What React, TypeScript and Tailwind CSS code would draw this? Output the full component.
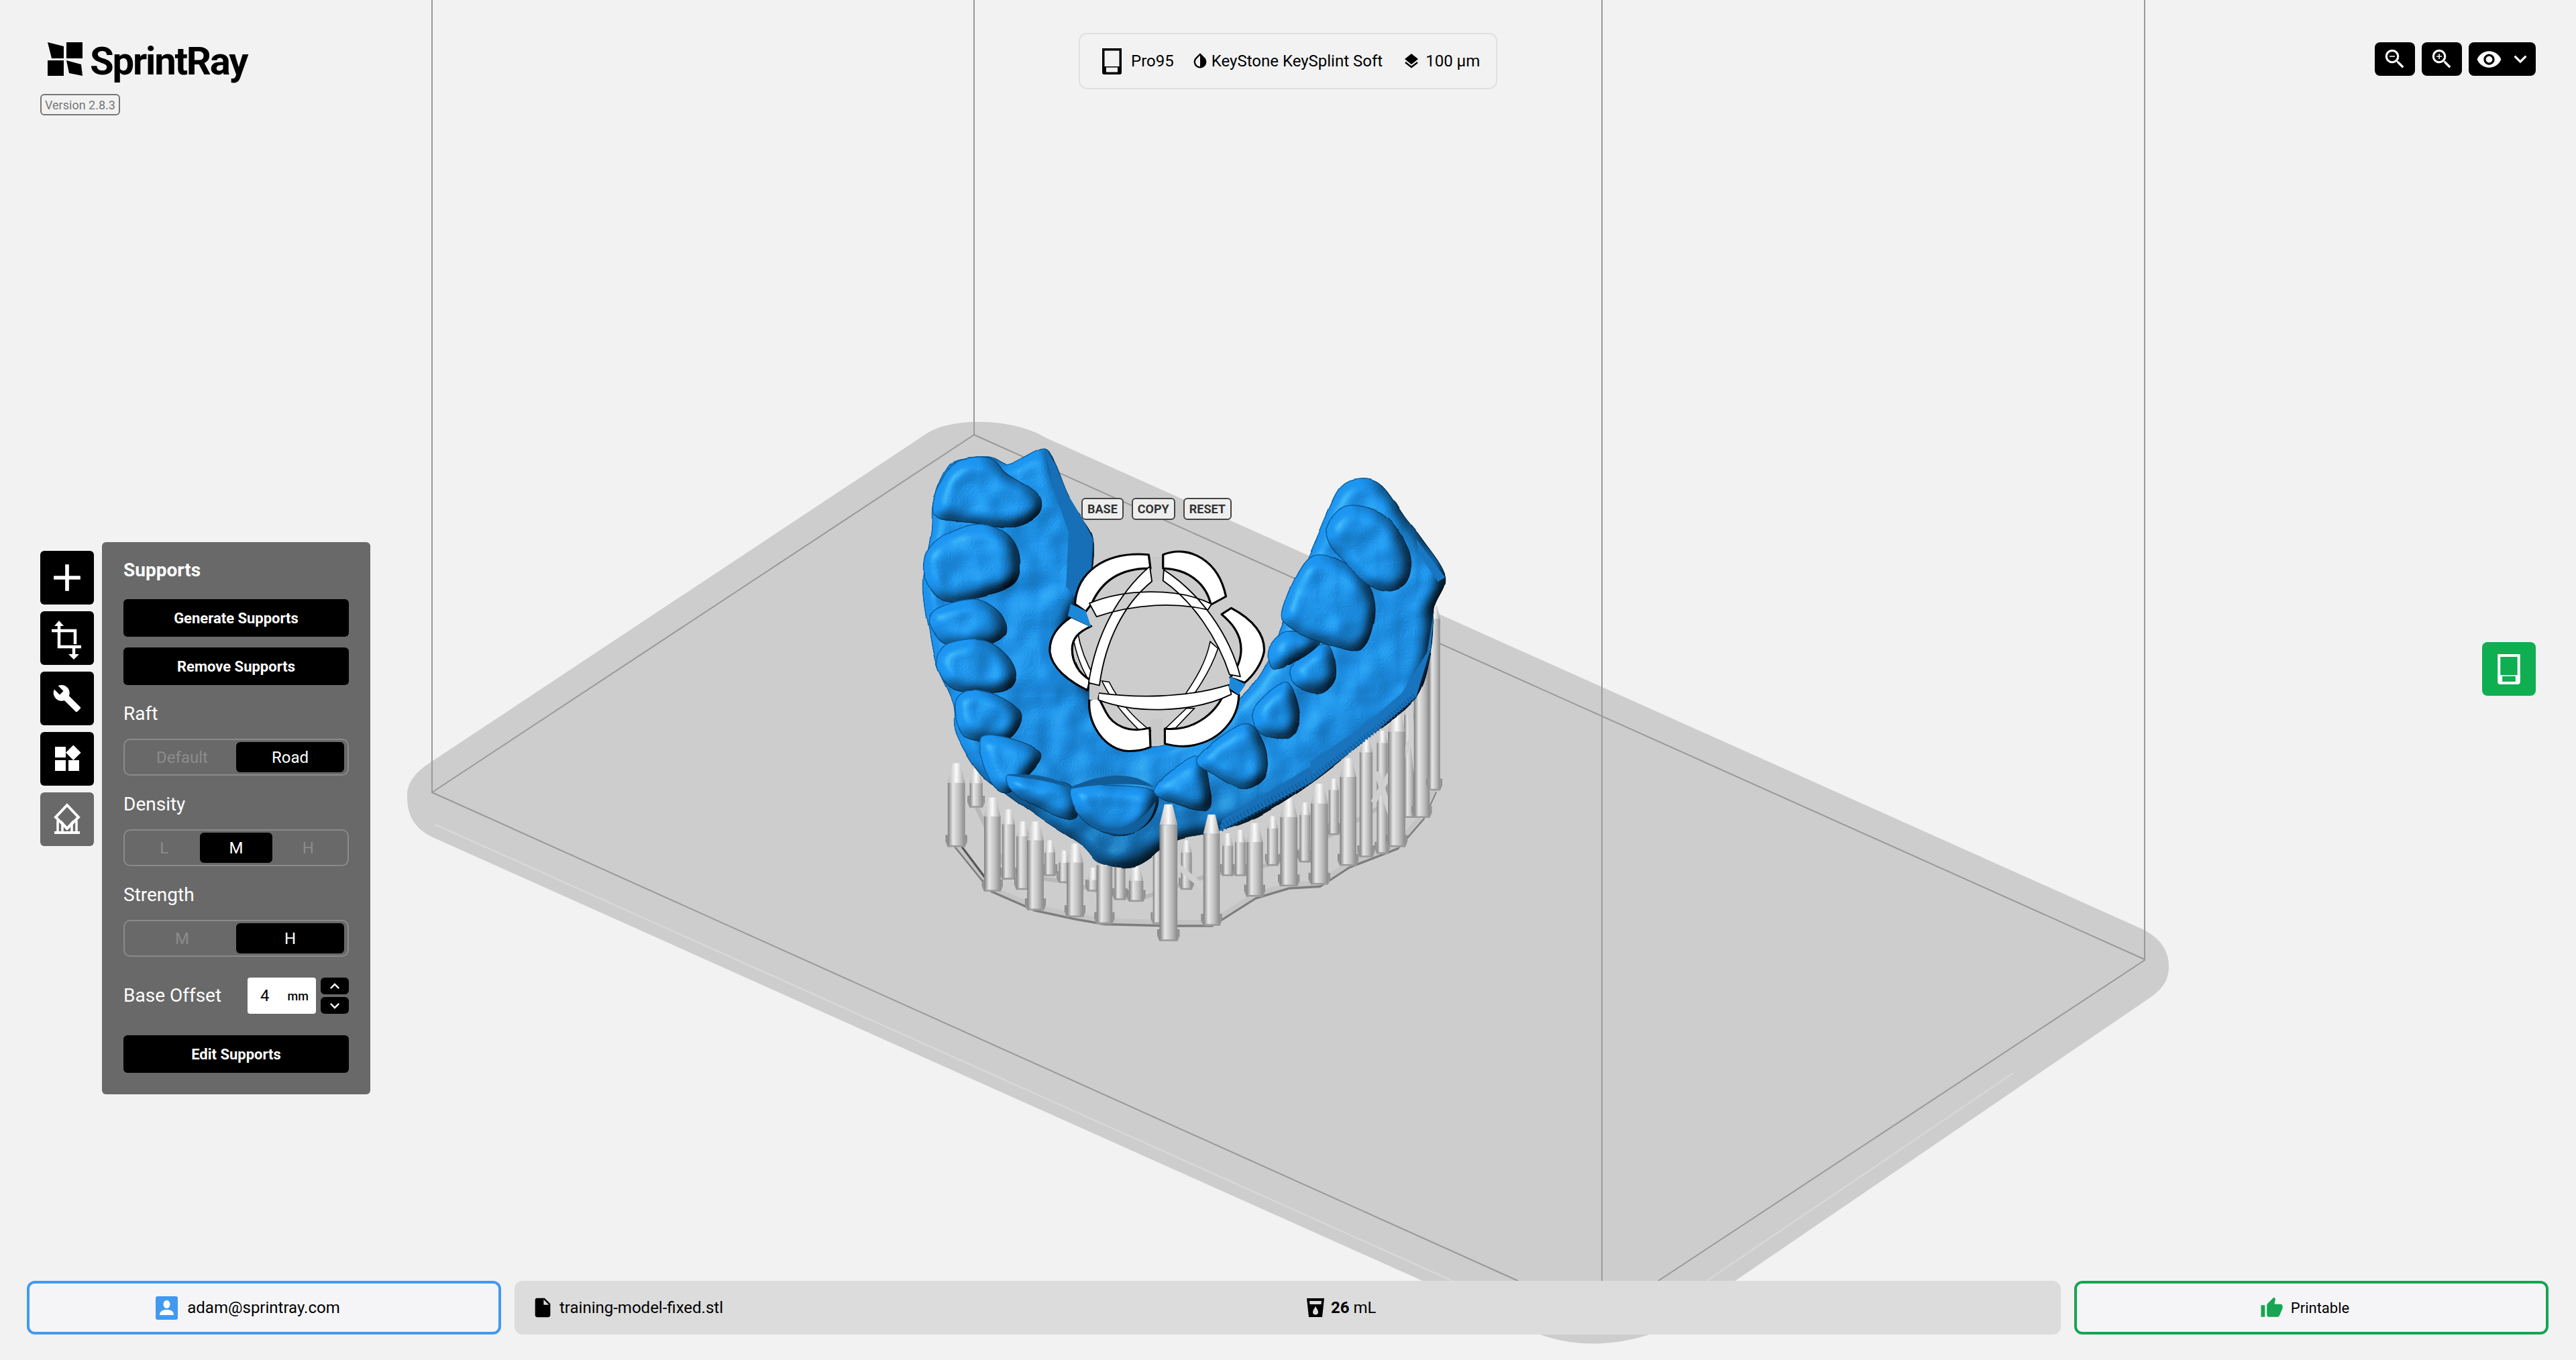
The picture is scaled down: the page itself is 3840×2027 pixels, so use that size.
import {
  MdAdd,
  MdBuild,
  MdExpandLess,
  MdExpandMore,
  MdInsertDriveFile,
  MdInvertColors,
  MdThumbUp,
  MdVisibility,
  MdWidgets,
  MdZoomIn,
  MdZoomOut,
} from "react-icons/md";

type Pt = [number, number];

// closed catmull-rom through the traced points
function smooth(pts: Pt[]) {
  const n = pts.length;
  let d = `M${pts[0][0]} ${pts[0][1]}`;
  for (let i = 0; i < n; i++) {
    const p0 = pts[(i - 1 + n) % n];
    const p1 = pts[i];
    const p2 = pts[(i + 1) % n];
    const p3 = pts[(i + 2) % n];
    const c1x = p1[0] + (p2[0] - p0[0]) / 6;
    const c1y = p1[1] + (p2[1] - p0[1]) / 6;
    const c2x = p2[0] - (p3[0] - p1[0]) / 6;
    const c2y = p2[1] - (p3[1] - p1[1]) / 6;
    d += `C${c1x} ${c1y} ${c2x} ${c2y} ${p2[0]} ${p2[1]}`;
  }
  return d + "Z";
}

const jaw: Pt[] = [
  [125, 130], [160, 92], [250, 82], [300, 103], [340, 85], [405, 55], [435, 100], [470, 190], [510, 260],
  [540, 320], [535, 420], [500, 500], [470, 560], [480, 650], [525, 750], [590, 860], [700, 925], [830, 880],
  [945, 790], [1010, 710], [1060, 590], [1110, 450], [1170, 300], [1225, 175], [1285, 145], [1345, 165],
  [1410, 260], [1455, 320], [1520, 430], [1490, 520], [1480, 640], [1440, 780], [1330, 880], [1150, 1030],
  [1000, 1130], [880, 1175], [770, 1200], [660, 1275], [560, 1265], [510, 1215], [400, 1140], [300, 1065],
  [225, 1005], [160, 890], [150, 800], [105, 690], [85, 590], [68, 450], [90, 300], [95, 215],
];

const teeth: Pt[][] = [
  [[120, 150], [160, 95], [250, 85], [300, 130], [385, 190], [385, 250], [310, 285], [200, 270], [110, 260], [95, 215]],
  [[85, 345], [140, 300], [225, 275], [300, 305], [335, 370], [320, 450], [220, 490], [130, 500], [80, 450], [70, 400]],
  [[85, 565], [110, 520], [205, 495], [275, 530], [300, 585], [270, 620], [190, 635], [120, 625]],
  [[105, 680], [130, 630], [230, 615], [300, 660], [325, 720], [290, 765], [180, 765], [130, 740]],
  [[155, 800], [190, 762], [270, 775], [340, 830], [310, 900], [235, 910], [175, 890]],
  [[225, 905], [300, 900], [395, 945], [360, 1010], [300, 1060], [250, 1020]],
  [[300, 1010], [400, 1025], [480, 1045], [495, 1130], [440, 1130], [330, 1070]],
  [[480, 1050], [600, 1040], [715, 1060], [700, 1140], [620, 1185], [520, 1150]],
  [[710, 1050], [830, 955], [865, 1050], [860, 1110], [790, 1100]],
  [[830, 960], [960, 860], [1015, 920], [1020, 1010], [960, 1050], [880, 1010]],
  [[985, 820], [1075, 740], [1115, 830], [1090, 900], [1010, 890]],
  [[1095, 690], [1190, 625], [1215, 720], [1170, 770], [1100, 745]],
  [[1030, 640], [1080, 590], [1170, 620], [1100, 680], [1040, 700]],
  [[1070, 520], [1150, 370], [1280, 420], [1325, 520], [1290, 640], [1190, 625], [1090, 580]],
  [[1190, 310], [1240, 225], [1350, 250], [1420, 360], [1410, 450], [1340, 470], [1260, 410]],
];

// [x, top, bottom, width]
const backPosts: [number, number, number, number][] = [
  [215, 990, 1100, 36], [305, 1110, 1310, 36], [420, 1200, 1300, 30], [460, 1230, 1320, 30], [540, 1280, 1345, 30],
  [615, 1240, 1370, 30], [660, 1270, 1375, 40], [800, 1200, 1340, 30], [915, 1180, 1300, 30], [950, 1170, 1300, 30],
  [1040, 1130, 1270, 30], [1130, 1090, 1260, 30], [1210, 1020, 1180, 28], [1300, 900, 1245, 36], [1345, 880, 1235, 30],
  [1420, 800, 1130, 28],
];
const midPosts: [number, number, number, number][] = [
  [160, 975, 1215, 48], [260, 1075, 1345, 46], [345, 1145, 1340, 36], [380, 1145, 1400, 46], [490, 1210, 1420, 46],
  [572, 1220, 1440, 44], [720, 1195, 1440, 26], [990, 1150, 1360, 46], [1085, 1075, 1330, 48], [1170, 1035, 1325, 48],
  [1250, 960, 1270, 46], [1385, 825, 1215, 48], [1455, 640, 1130, 44], [1490, 515, 1050, 32],
];
const frontPosts: [number, number, number, number][] = [
  [750, 1095, 1490, 50], [870, 1125, 1445, 46],
];

function Post({ post }: { post: [number, number, number, number] }) {
  const [x, top, bottom, w] = post;
  const l = x - w / 2;
  const r = x + w / 2;
  const neck = top + w * 1.2;
  return (
    <g>
      <path d={`M${l - 6} ${bottom - 30}H${r + 6}V${bottom - 10}L${r} ${bottom + 5}H${l}L${l - 6} ${bottom - 10}Z`} fill="url(#post)" />
      <path d={`M${l - 6} ${bottom - 10}L${l} ${bottom + 5}H${r}L${r + 6} ${bottom - 10}`} fill="#9a9a9a" />
      <rect x={l} y={neck} width={w} height={bottom - neck} fill="url(#post)" />
      <path d={`M${l} ${neck}L${x - w * 0.22} ${top}H${x + w * 0.22}L${r} ${neck}Z`} fill="url(#tip)" />
    </g>
  );
}

function Gizmo() {
  const big = "M490 510C495 420 570 355 695 366L700 406C620 405 565 440 536 510L520 532Z" +
    "M735 366C810 335 890 385 910 488L868 512C855 450 805 408 735 406Z" +
    "M925 522C985 555 1020 600 1016 650C1010 685 985 720 962 740L922 725C948 690 958 650 948 612C938 580 920 560 898 540Z" +
    "M480 548C440 575 418 610 420 650C425 695 470 735 525 762L532 732C500 712 482 680 482 642C482 612 498 592 535 575Z" +
    "M530 790C525 860 570 935 640 940C665 940 685 935 700 928L698 872C640 888 596 866 576 826L555 782Z" +
    "M740 874C805 882 880 845 912 755L946 775C945 850 890 905 830 920C800 930 765 925 740 918Z";
  const lower = "M497 590C505 640 525 690 545 725L530 735C505 695 490 640 483 600Z" +
    "M565 735C590 790 630 840 672 882L700 880C650 840 610 790 585 738Z" +
    "M866 620C855 680 825 730 798 772L820 775C850 730 875 680 888 640Z" +
    "M800 815L740 875L770 872L822 815Z";
  const bands = "M530 508C620 468 770 458 870 510L860 527C770 505 660 508 550 547Z" +
    "M698 400C610 480 548 600 528 740L558 748C574 620 624 512 704 444Z" +
    "M737 410C840 480 920 600 950 722L920 716C888 612 820 504 735 442Z" +
    "M555 770C650 783 790 788 918 746L925 774C820 828 660 832 555 790Z";
  return (
    <g>
      <rect x="700" y="372" width="34" height="70" fill="#c8c8c8" />
      <rect x="700" y="845" width="34" height="75" fill="#c8c8c8" />
      <path d={lower} fill="#fff" stroke="#000" strokeWidth="3" />
      <path d={big} fill="#fff" stroke="#000" strokeWidth="6" strokeLinejoin="round" />
      <path d={bands} fill="#fff" stroke="#000" strokeWidth="3.5" strokeLinejoin="round" />
      <path d="M520 530L478 510L470 545L535 578Z" fill="#1b88d9" />
      <path d="M922 722L965 745L945 775L918 755Z" fill="#1b88d9" />
      <path d="M530 745L560 752L552 790L530 790Z" fill="#c8c8c8" />
    </g>
  );
}

function Scene() {
  return (
    <svg className="absolute inset-0 h-full w-full" viewBox="0 0 3840 2027">
      <defs>
        <linearGradient id="post" x1="0" x2="1" y1="0" y2="0">
          <stop offset="0" stopColor="#7c7c7c" />
          <stop offset="0.3" stopColor="#e6e6e6" />
          <stop offset="0.65" stopColor="#c0c0c0" />
          <stop offset="1" stopColor="#8a8a8a" />
        </linearGradient>
        <linearGradient id="tip" x1="0" x2="1" y1="0" y2="0">
          <stop offset="0" stopColor="#b5b5b5" />
          <stop offset="0.5" stopColor="#fbfbfb" />
          <stop offset="1" stopColor="#a0a0a0" />
        </linearGradient>
        <linearGradient id="palate" x1="0" x2="0" y1="0" y2="1">
          <stop offset="0" stopColor="#1a88dc" />
          <stop offset="0.75" stopColor="#1a84d6" />
          <stop offset="1" stopColor="#125f9a" />
        </linearGradient>
        <filter id="sculpt" colorInterpolationFilters="sRGB" x="-5%" y="-5%" width="110%" height="110%">
          <feTurbulence type="fractalNoise" baseFrequency="0.009" numOctaves="2" seed="7" result="n" />
          <feDisplacementMap in="SourceGraphic" in2="n" scale="10" xChannelSelector="R" yChannelSelector="G" result="d" />
          <feColorMatrix in="d" type="matrix" values="0 0 0 0 0 0 0 0 0 0 0 0 0 0 0 0 0 0 1 0" result="a" />
          <feGaussianBlur in="a" stdDeviation="20" result="h" />
          <feComposite in="h" in2="n" operator="arithmetic" k1="0" k2="0.7" k3="0.25" k4="0" result="hh" />
          <feDiffuseLighting in="hh" surfaceScale="34" diffuseConstant="1.2" lightingColor="#fff" result="light">
            <feDistantLight azimuth="215" elevation="52" />
          </feDiffuseLighting>
          <feComposite in="light" in2="d" operator="arithmetic" k1="1.1" k2="0" k3="0" k4="0" result="lit" />
          <feSpecularLighting in="hh" surfaceScale="34" specularConstant="0.6" specularExponent="40" lightingColor="#58d0ff" result="spec">
            <feDistantLight azimuth="215" elevation="52" />
          </feSpecularLighting>
          <feComposite in="spec" in2="a" operator="in" result="specIn" />
          <feComposite in="lit" in2="a" operator="in" result="litIn" />
          <feMerge>
            <feMergeNode in="litIn" />
            <feMergeNode in="specIn" />
          </feMerge>
        </filter>
      </defs>

      <path
        d="M636 1140L1383 645C1420 622 1510 622 1560 653L3194 1385C3228 1402 3233 1425 3233 1440C3233 1460 3225 1473 3205 1487L2500 1968C2440 2010 2330 2015 2270 1976L643 1247C610 1230 607 1205 607 1185C607 1170 615 1155 636 1140Z"
        fill="#cdcdcd"
      />
      <path d="M649 1229L2165 1909M2544 1909L3000 1600" stroke="#dadada" strokeWidth="2" fill="none" />

      <g stroke="#999" strokeWidth="2" fill="none">
        <path d="M644 0V1181L2263 1909" />
        <path d="M1452 0V648L644 1181" />
        <path d="M1452 648L3197 1430" />
        <path d="M3197 0V1431L2472 1909" />
        <path d="M2388 0V1909" />
      </g>

      <g transform="translate(1340 640) scale(0.5357 0.5102)">
        <path
          d="M160 1216L260 1346L380 1401L490 1426L572 1441L750 1446L870 1446L990 1366L1085 1336L1170 1331L1250 1276L1385 1221L1455 1136L1490 1056"
          fill="none"
          stroke="#7d7d7d"
          strokeWidth="16"
        />
        <path
          d="M160 1210L260 1340L380 1395L490 1420L572 1435L750 1440L870 1440L990 1360L1085 1330L1170 1325L1250 1270L1385 1215L1455 1130L1490 1050"
          fill="none"
          stroke="#c4c4c4"
          strokeWidth="14"
        />
        <path
          d="M215 1100L305 1300L460 1320L540 1345L660 1375L870 1300L1040 1270L1210 1180L1345 1100L1455 950"
          fill="none"
          stroke="#b8b8b8"
          strokeWidth="12"
        />
        <path d="M165 1205L240 1310" stroke="#555" strokeWidth="6" />
        {backPosts.map((p) => <Post key={p[0]} post={p} />)}
        <path d="M770 1270L860 1350M1330 1000L1370 1130M1370 1000L1320 1090M1420 800L1440 1000M1440 880L1400 960" stroke="#d0d0d0" strokeWidth="16" />
        {midPosts.map((p) => <Post key={p[0]} post={p} />)}

        <path d={smooth(jaw)} fill="url(#palate)" stroke="#0e5d9a" strokeWidth="3" filter="url(#sculpt)" />
        <path d="M405 55L435 100L470 190L510 260L540 320L535 420L500 500L465 460L472 300L430 170Z" fill="#166fb7" />
        <path d="M1145 970L1290 870L1400 770L1470 650L1490 520L1480 640L1440 780L1330 880L1150 1030Z" fill="#1a73bd" />
        <path d="M1150 1020L1330 875L1440 775" stroke="#125f9e" strokeWidth="16" strokeDasharray="4 6" fill="none" />
        <path d="M890 1175L1150 1030L1145 985L900 1140Z" fill="#1770b8" />
        <path d="M895 1165L1145 1025" stroke="#125f9e" strokeWidth="22" strokeDasharray="4 7" fill="none" />
        {teeth.map((t, i) => (
          <path key={i} d={smooth(t)} fill="#1a88dc" stroke="#0c5a98" strokeWidth="3" filter="url(#sculpt)" />
        ))}
        <path d="M300 1010C380 1000 440 1020 480 1045C560 1005 650 995 710 1045C640 1030 560 1035 480 1050C420 1025 360 1020 300 1010Z" fill="#125c97" />
        <path d="M500 1120C540 1170 600 1190 650 1180C690 1160 710 1130 715 1085C690 1130 640 1170 590 1165C550 1160 520 1140 500 1120Z" fill="#125f9e" />
        <path d="M1440 320L1520 432L1500 445L1445 360Z" fill="#1976c0" />
        {frontPosts.map((p) => <Post key={p[0]} post={p} />)}
        <Gizmo />
      </g>
    </svg>
  );
}

function PrinterIcon({ className, windowClass }: { className: string; windowClass: string }) {
  return (
    <svg className={className} viewBox="0 0 29 39">
      <path d="M1.75 1.75H27.25V30H1.75Z" fill="none" stroke="currentColor" strokeWidth="3.5" />
      <path d="M0 27H29V36Q29 39 26 39H3Q0 39 0 36Z" fill="currentColor" />
      <rect x="6" y="28.5" width="17" height="7" className={windowClass} />
    </svg>
  );
}

function LayersIcon() {
  return (
    <svg className="h-[23px] w-[22px]" viewBox="0 0 22 23">
      <path d="M11 0L21 8L11 16L1 8Z" fill="#000" />
      <path d="M2 13L11 20L20 13" fill="none" stroke="#000" strokeWidth="2.4" />
    </svg>
  );
}

function CropIcon() {
  return (
    <svg className="h-20 w-20" viewBox="0 0 80 80" fill="none" stroke="#fff" strokeWidth="4.5">
      <path d="M28 22V53H61" />
      <path d="M17 29H52V49" />
      <path d="M50 53V66" />
      <path d="M21 22L28 14L35 22Z" fill="#fff" stroke="none" />
      <path d="M42 64L50 72L58 64Z" fill="#fff" stroke="none" />
    </svg>
  );
}

function BaseIcon() {
  return (
    <svg className="h-20 w-20" viewBox="0 0 80 80" fill="none" stroke="#fff" strokeWidth="3.5">
      <path d="M40 19L57 37L40 54L23 37Z" strokeWidth="4" />
      <path d="M26 59V42M54 59V42M33 59V46L40 54L47 46V59" />
      <path d="M21 60H59" strokeWidth="4" />
    </svg>
  );
}

function Logo() {
  return (
    <div className="ml-[11px] flex items-start gap-[11px]">
      <svg className="h-[50px] w-[52px]" viewBox="0 0 52 50">
        <path d="M0 0L24 6V24H6Z" fill="#000" />
        <path d="M28 0H52V24H28Z" fill="#000" />
        <path d="M0 27H24V50H0Z" fill="#000" />
        <path d="M28 27L50 33L52 50L32 46Z" fill="#000" />
      </svg>
      <span className="mt-[-6px] text-[58px] leading-[68px] font-bold tracking-[-2.2px] text-black">SprintRay</span>
    </div>
  );
}

const railItems = [
  { icon: <MdAdd size={68} />, on: true },
  { icon: <CropIcon />, on: true },
  { icon: <MdBuild size={44} />, on: true },
  { icon: <MdWidgets size={48} />, on: true },
  { icon: <BaseIcon />, on: false },
];

function Toggle({ label, options, active }: { label: string; options: string[]; active: string }) {
  return (
    <>
      <div className="mt-[27px] text-[28px] leading-8 text-white">{label}</div>
      <div className="mt-[21px] flex h-[55px] rounded-[10px] border-2 border-[#8a8a8a] px-[5px] py-[3px]">
        {options.map((o) => (
          <div
            key={o}
            className={
              o === active
                ? "flex flex-1 items-center justify-center rounded-[6px] bg-black text-[24px] text-white"
                : "flex flex-1 items-center justify-center text-[24px] text-[#8c8c8c]"
            }
          >
            {o}
          </div>
        ))}
      </div>
    </>
  );
}

function ActionButton({ label, className }: { label: string; className: string }) {
  return (
    <button className={`flex h-14 items-center justify-center rounded-[6px] bg-black text-[22px] font-bold text-white ${className}`}>
      {label}
    </button>
  );
}

function SupportsPanel() {
  return (
    <div className="flex h-[823px] w-[400px] flex-col rounded-[6px] bg-[#696969] px-8 pt-[26px]">
      <div className="text-[28px] leading-8 font-bold text-white">Supports</div>
      <ActionButton label="Generate Supports" className="mt-[27px]" />
      <ActionButton label="Remove Supports" className="mt-4" />
      <Toggle label="Raft" options={["Default", "Road"]} active="Road" />
      <Toggle label="Density" options={["L", "M", "H"]} active="M" />
      <Toggle label="Strength" options={["M", "H"]} active="H" />
      <div className="mt-[31px] flex h-[54px] items-center">
        <span className="text-[28px] text-white">Base Offset</span>
        <div className="ml-auto flex h-full w-[102px] items-center rounded-[4px] bg-white pl-[19px]">
          <span className="text-[24px] text-black">4</span>
          <span className="ml-[27px] text-[18px] font-medium text-black">mm</span>
        </div>
        <div className="ml-[7px] flex h-full w-[42px] flex-col justify-between">
          <div className="flex h-[25px] items-center justify-center rounded-[6px] bg-black text-white">
            <MdExpandLess size={28} />
          </div>
          <div className="flex h-[25px] items-center justify-center rounded-[6px] bg-black text-white">
            <MdExpandMore size={28} />
          </div>
        </div>
      </div>
      <ActionButton label="Edit Supports" className="mt-8" />
    </div>
  );
}

export default function App() {
  return (
    <div className="relative h-[2027px] w-[3840px] overflow-hidden bg-[#f2f2f2] font-['Roboto',sans-serif]">
      <Scene />

      <div className="absolute top-[742px] left-[1612px] flex gap-3 text-[18px] font-bold text-[#333]">
        {["BASE", "COPY", "RESET"].map((b) => (
          <div key={b} className="flex h-[33px] items-center rounded-[6px] border-2 border-[#444] bg-[#eeeeee] px-[7px]">
            {b}
          </div>
        ))}
      </div>

      <div className="relative flex h-full flex-col">
        <header className="grid h-[808px] grid-cols-3 items-start px-[60px] pt-[49px]">
          <div className="mt-[14px]">
            <Logo />
            <div className="mt-[15px] inline-flex h-8 items-center rounded-[6px] border-2 border-[#777] px-[5px] text-[18px] text-[#777]">
              Version 2.8.3
            </div>
          </div>
          <div className="flex h-[84px] w-[624px] items-center justify-self-center rounded-xl border-2 border-[#e0e0e0] pl-[33px] text-[24px] text-black">
            <PrinterIcon className="h-[39px] w-[29px]" windowClass="fill-[#f2f2f2]" />
            <span className="ml-[14px]">Pro95</span>
            <MdInvertColors size={28} className="ml-[25px]" />
            <span className="ml-[3px]">KeyStone KeySplint Soft</span>
            <span className="ml-8"><LayersIcon /></span>
            <span className="ml-[10px]">100 µm</span>
          </div>
          <div className="mt-[14px] flex gap-[10px] justify-self-end text-white">
            <button className="flex h-[50px] w-[60px] items-center justify-center rounded-lg bg-black"><MdZoomOut size={38} /></button>
            <button className="flex h-[50px] w-[60px] items-center justify-center rounded-lg bg-black"><MdZoomIn size={38} /></button>
            <button className="flex h-[50px] w-[100px] items-center rounded-lg bg-black pl-[11px]">
              <MdVisibility size={39} />
              <MdExpandMore size={38} className="ml-2" />
            </button>
          </div>
        </header>

        <main className="flex flex-1 items-start px-[60px]">
          <div className="mt-[13px] flex flex-col gap-[10px]">
            {railItems.map((item, i) => (
              <button
                key={i}
                className={
                  item.on
                    ? "flex h-20 w-20 items-center justify-center rounded-[6px] bg-black text-white"
                    : "flex h-20 w-20 items-center justify-center rounded-[6px] bg-[#696969] text-white"
                }
              >
                {item.icon}
              </button>
            ))}
          </div>
          <div className="ml-3">
            <SupportsPanel />
          </div>
          <button className="mt-[149px] ml-auto flex h-20 w-20 items-center justify-center rounded-lg bg-[#0fae50] text-white">
            <PrinterIcon className="h-[45px] w-[34px]" windowClass="fill-[#0fae50]" />
          </button>
        </main>

        <footer className="flex h-[118px] gap-5 pr-[41px] pb-[38px] pl-10">
          <div className="flex w-[707px] items-center justify-center rounded-xl border-4 border-[#4299f0] bg-[#f5f5f7] pr-12 text-[24px] text-black">
            <svg className="h-[35px] w-[33px]" viewBox="0 0 33 35">
              <rect width="33" height="35" rx="3" fill="#4299f0" />
              <ellipse cx="16.5" cy="12" rx="5" ry="6" fill="#fff" />
              <path d="M6 28C6 22 11 20 16.5 20C22 20 27 22 27 28Z" fill="#fff" />
            </svg>
            <span className="ml-[14px]">adam@sprintray.com</span>
          </div>
          <div className="relative flex flex-1 items-center rounded-xl bg-[#dcdcdc] pl-[31px] text-[24px] text-black">
            <MdInsertDriveFile size={34} className="-ml-[6px]" />
            <span className="ml-2">training-model-fixed.stl</span>
            <div className="absolute left-[1181px] flex items-center">
              <svg className="h-7 w-[26px]" viewBox="0 0 26 28">
                <path d="M0 0H26L23 28H3Z" fill="#000" />
                <path d="M4 4H22L21.5 9H4.5Z" fill="#dcdcdc" />
                <path d="M13 12C15 16 17 18 17 20.5A4 4 0 0 1 9 20.5C9 18 11 16 13 12Z" fill="#dcdcdc" />
              </svg>
              <span className="ml-[10px] font-bold">26</span>
              <span className="ml-[6px]">mL</span>
            </div>
          </div>
          <div className="flex w-[707px] items-center justify-center rounded-xl border-4 border-[#16a552] bg-[#f5f5f7] pr-5 text-[22px] text-black">
            <MdThumbUp size={35} className="text-[#16a552]" />
            <span className="ml-[11px]">Printable</span>
          </div>
        </footer>
      </div>
    </div>
  );
}
